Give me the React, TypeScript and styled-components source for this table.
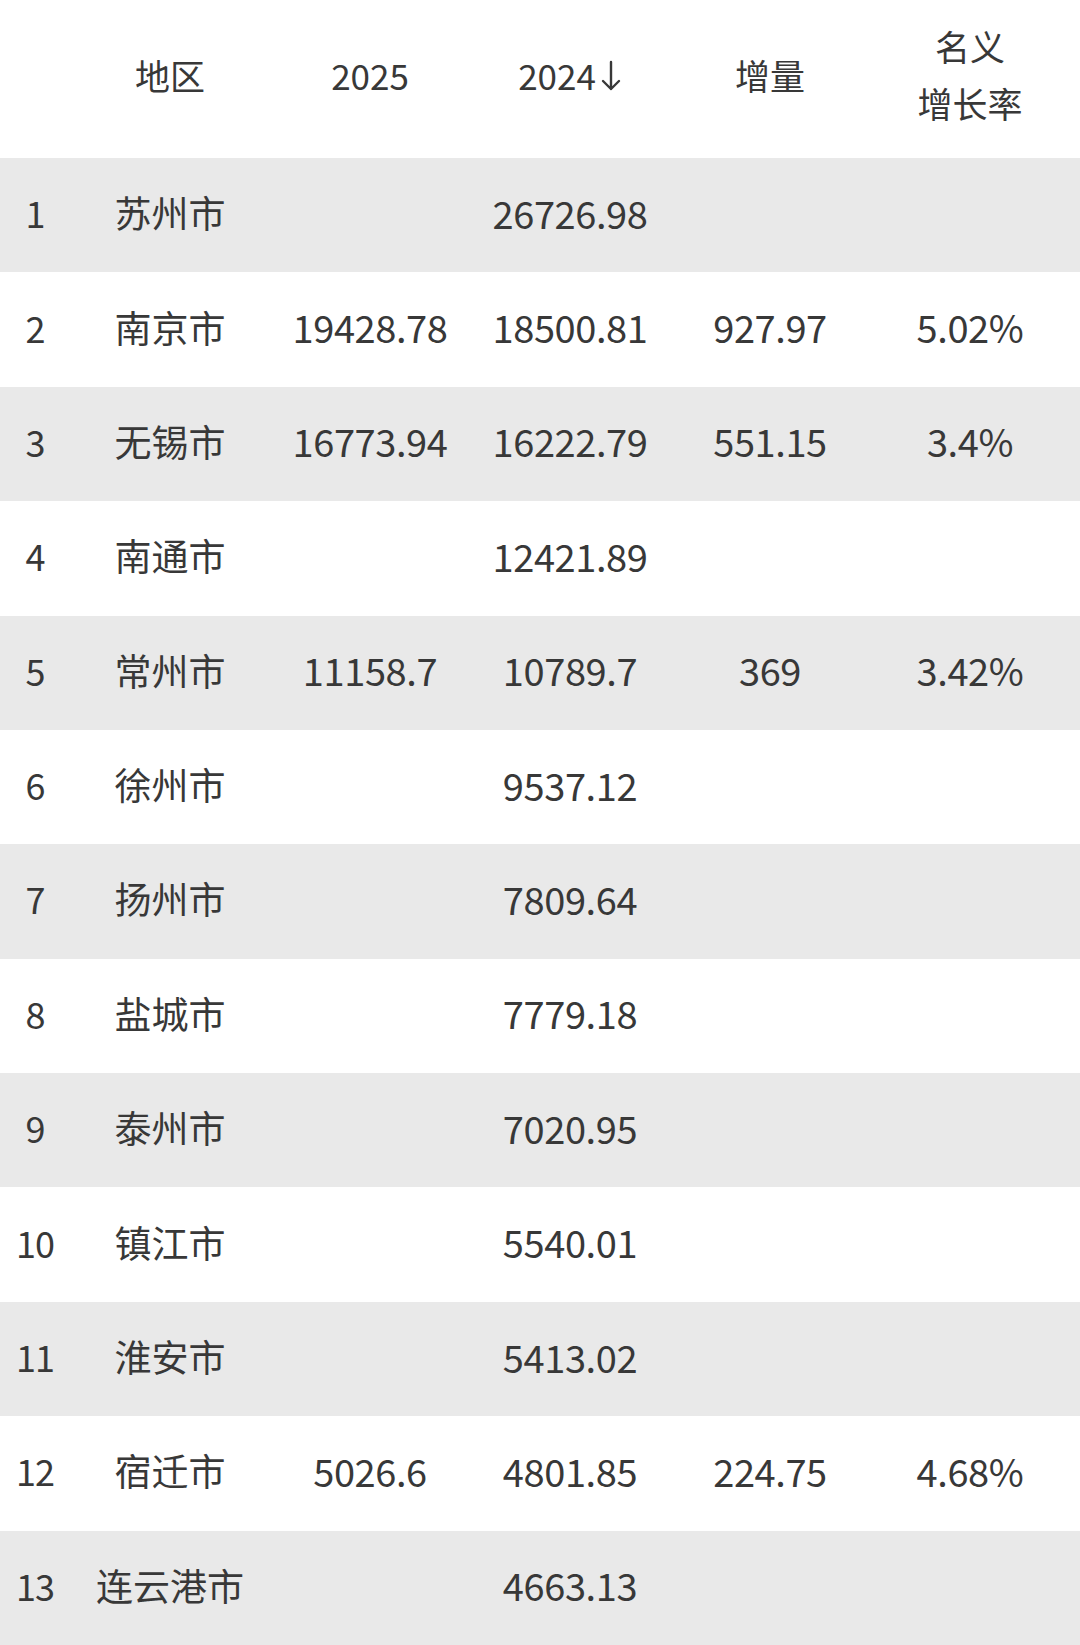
import styled, { createGlobalStyle } from "styled-components"

const GlobalStyle = createGlobalStyle`
  html, body {
    margin: 0;
    padding: 0;
    background: #ffffff;
  }
  body {
    font-family: "Noto Sans CJK SC", "Noto Sans", sans-serif;
    color: #383838;
  }
`

const Table = styled.div`
  width: 1080px;
  height: 1645px;
  display: grid;
  grid-template-rows: 158px repeat(13, 1fr);
  overflow: hidden;
`

const Row = styled.div<{ $shaded?: boolean; $head?: boolean }>`
  display: grid;
  grid-template-columns: 70px repeat(5, 200px);
  align-items: center;
  padding-bottom: ${(p) => (p.$head ? "10px" : "6px")};
  background: ${(p) => (p.$shaded ? "#e9e9e9" : "#ffffff")};
`

const HeadCell = styled.div`
  text-align: center;
  font-size: 35px;
  line-height: 57px;
  color: #383838;
  display: flex;
  justify-content: center;
  align-items: center;
`

const Cell = styled.div<{ $num?: boolean }>`
  text-align: center;
  font-size: ${(p) => (p.$num ? "38px" : "37px")};
  letter-spacing: ${(p) => (p.$num ? "-0.4px" : "0")};
  white-space: nowrap;
  color: #383838;
`

const Rank = styled(Cell)`
  font-size: 36px;
  letter-spacing: -1px;
`

const Stack = styled.span`
  display: block;
`

const SortArrow = () => (
  <svg width="22" height="34" viewBox="0 0 22 34" style={{ marginLeft: 4, marginTop: 4 }}>
    <path
      d="M11 3 V30 M3 22 L11 30 L19 22"
      fill="none"
      stroke="#383838"
      strokeWidth="2.4"
      strokeLinecap="round"
      strokeLinejoin="round"
    />
  </svg>
)

type Region = {
  name: string
  y2025?: string
  y2024: string
  delta?: string
  rate?: string
}

const data: Region[] = [
  { name: "苏州市", y2024: "26726.98" },
  { name: "南京市", y2025: "19428.78", y2024: "18500.81", delta: "927.97", rate: "5.02%" },
  { name: "无锡市", y2025: "16773.94", y2024: "16222.79", delta: "551.15", rate: "3.4%" },
  { name: "南通市", y2024: "12421.89" },
  { name: "常州市", y2025: "11158.7", y2024: "10789.7", delta: "369", rate: "3.42%" },
  { name: "徐州市", y2024: "9537.12" },
  { name: "扬州市", y2024: "7809.64" },
  { name: "盐城市", y2024: "7779.18" },
  { name: "泰州市", y2024: "7020.95" },
  { name: "镇江市", y2024: "5540.01" },
  { name: "淮安市", y2024: "5413.02" },
  { name: "宿迁市", y2025: "5026.6", y2024: "4801.85", delta: "224.75", rate: "4.68%" },
  { name: "连云港市", y2024: "4663.13" },
]

export default function App() {
  return (
    <>
      <GlobalStyle />
      <Table>
        <Row $head>
          <HeadCell />
          <HeadCell>地区</HeadCell>
          <HeadCell>2025</HeadCell>
          <HeadCell>
            2024
            <SortArrow />
          </HeadCell>
          <HeadCell>增量</HeadCell>
          <HeadCell>
            <div>
              <Stack>名义</Stack>
              <Stack>增长率</Stack>
            </div>
          </HeadCell>
        </Row>
        {data.map((r, i) => (
          <Row key={r.name} $shaded={i % 2 === 0}>
            <Rank>{i + 1}</Rank>
            <Cell>{r.name}</Cell>
            <Cell $num>{r.y2025 ?? ""}</Cell>
            <Cell $num>{r.y2024}</Cell>
            <Cell $num>{r.delta ?? ""}</Cell>
            <Cell $num>{r.rate ?? ""}</Cell>
          </Row>
        ))}
      </Table>
    </>
  )
}
